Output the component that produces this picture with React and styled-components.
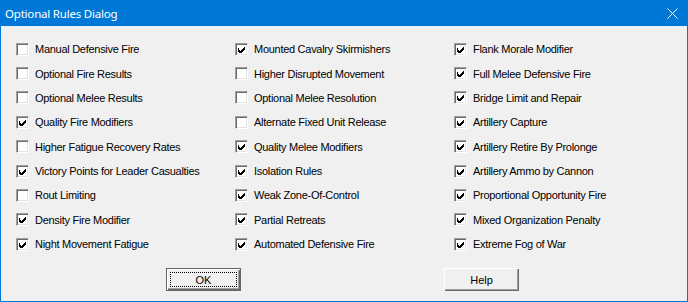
import React, { useState } from "react";
import styled, { createGlobalStyle } from "styled-components";

const GlobalStyle = createGlobalStyle`
  html, body {
    margin: 0;
    padding: 0;
    background: #f0f0f0;
  }
`;

const Window = styled.div`
  width: 688px;
  height: 302px;
  box-sizing: border-box;
  border: 1px solid #0078d7;
  border-top: none;
  background: #f0f0f0;
  display: flex;
  flex-direction: column;
  font-family: "Liberation Sans", Arial, sans-serif;
  font-size: 11px;
  letter-spacing: -0.28px;
  color: #000;
`;

const TitleBar = styled.div`
  height: 26px;
  margin: 0 -1px;
  background: #0078d7;
  display: flex;
  align-items: center;
  justify-content: space-between;
  padding: 0 10px 0 5px;
`;

const Title = styled.span`
  color: #fff;
  font-family: "Noto Sans", "Liberation Sans", sans-serif;
  font-size: 11.5px;
  letter-spacing: -0.2px;
`;

const CloseIcon = () => (
  <svg width="11" height="11" viewBox="0 0 11 11">
    <path d="M0.5 0.5 L10.5 10.5 M10.5 0.5 L0.5 10.5" stroke="#fff" strokeWidth="1" />
  </svg>
);

const Options = styled.div`
  display: grid;
  grid-template-columns: repeat(3, 219px);
  grid-auto-rows: 24.375px;
  padding: 11px 0 0 15px;
`;

const Row = styled.label`
  display: flex;
  align-items: center;
  gap: 6px;
  white-space: nowrap;
  cursor: default;
`;

const Box = styled.span`
  width: 13px;
  height: 13px;
  box-sizing: border-box;
  flex: none;
  background: #fff;
  border-top: 1px solid #a0a0a0;
  border-left: 1px solid #a0a0a0;
  border-right: 1px solid #ffffff;
  border-bottom: 1px solid #ffffff;
  box-shadow: inset 1px 1px 0 #696969, inset -1px -1px 0 #e3e3e3;
  display: flex;
  align-items: center;
  justify-content: center;
`;

const Check = () => (
  <svg width="7" height="7" viewBox="0 0 7 7">
    <path d="M0 2h1v2h1v1h1v-1h1v-1h1v-1h1v-1h1v3h-1v1h-1v1h-1v1h-1v1h-1v-1h-1v-1h-1z" fill="#000" />
  </svg>
);

const Buttons = styled.div`
  display: flex;
  gap: 203px;
  padding: 12px 0 0 165px;
`;

const Button = styled.button`
  width: 75px;
  height: 23px;
  box-sizing: border-box;
  padding: 0;
  background: #f0f0f0;
  font-family: "Liberation Sans", Arial, sans-serif;
  font-size: 11px;
  color: #000;
  border: ${(p) => (p.$default ? "1px solid #646464" : "none")};
  box-shadow: inset 1px 1px 0 #fff, inset -1px -1px 0 #696969,
    inset -2px -2px 0 #a0a0a0;
  display: flex;
  align-items: center;
  justify-content: center;
`;

const Focus = styled.span`
  box-sizing: border-box;
  width: 67px;
  height: 15px;
  border: 1px dotted #000;
  display: flex;
  align-items: center;
  justify-content: center;
`;

const columns = [
  [
    ["Manual Defensive Fire", false],
    ["Optional Fire Results", false],
    ["Optional Melee Results", false],
    ["Quality Fire Modifiers", true],
    ["Higher Fatigue Recovery Rates", false],
    ["Victory Points for Leader Casualties", true],
    ["Rout Limiting", false],
    ["Density Fire Modifier", true],
    ["Night Movement Fatigue", true],
  ],
  [
    ["Mounted Cavalry Skirmishers", true],
    ["Higher Disrupted Movement", false],
    ["Optional Melee Resolution", false],
    ["Alternate Fixed Unit Release", false],
    ["Quality Melee Modifiers", true],
    ["Isolation Rules", true],
    ["Weak Zone-Of-Control", true],
    ["Partial Retreats", true],
    ["Automated Defensive Fire", true],
  ],
  [
    ["Flank Morale Modifier", true],
    ["Full Melee Defensive Fire", true],
    ["Bridge Limit and Repair", true],
    ["Artillery Capture", true],
    ["Artillery Retire By Prolonge", true],
    ["Artillery Ammo by Cannon", true],
    ["Proportional Opportunity Fire", true],
    ["Mixed Organization Penalty", true],
    ["Extreme Fog of War", true],
  ],
];

export default function App() {
  const [checks, setChecks] = useState(() =>
    Object.fromEntries(columns.flat().map(([name, on]) => [name, on]))
  );

  // rows are listed column by column, the grid fills row by row
  const cells = [];
  for (let r = 0; r < 9; r++) {
    for (let c = 0; c < 3; c++) cells.push(columns[c][r][0]);
  }

  return (
    <>
      <GlobalStyle />
      <Window>
        <TitleBar>
          <Title>Optional Rules Dialog</Title>
          <CloseIcon />
        </TitleBar>
        <Options>
          {cells.map((name) => (
            <Row
              key={name}
              onClick={() => setChecks((s) => ({ ...s, [name]: !s[name] }))}
            >
              <Box>{checks[name] && <Check />}</Box>
              {name}
            </Row>
          ))}
        </Options>
        <Buttons>
          <Button $default>
            <Focus>OK</Focus>
          </Button>
          <Button>Help</Button>
        </Buttons>
      </Window>
    </>
  );
}
